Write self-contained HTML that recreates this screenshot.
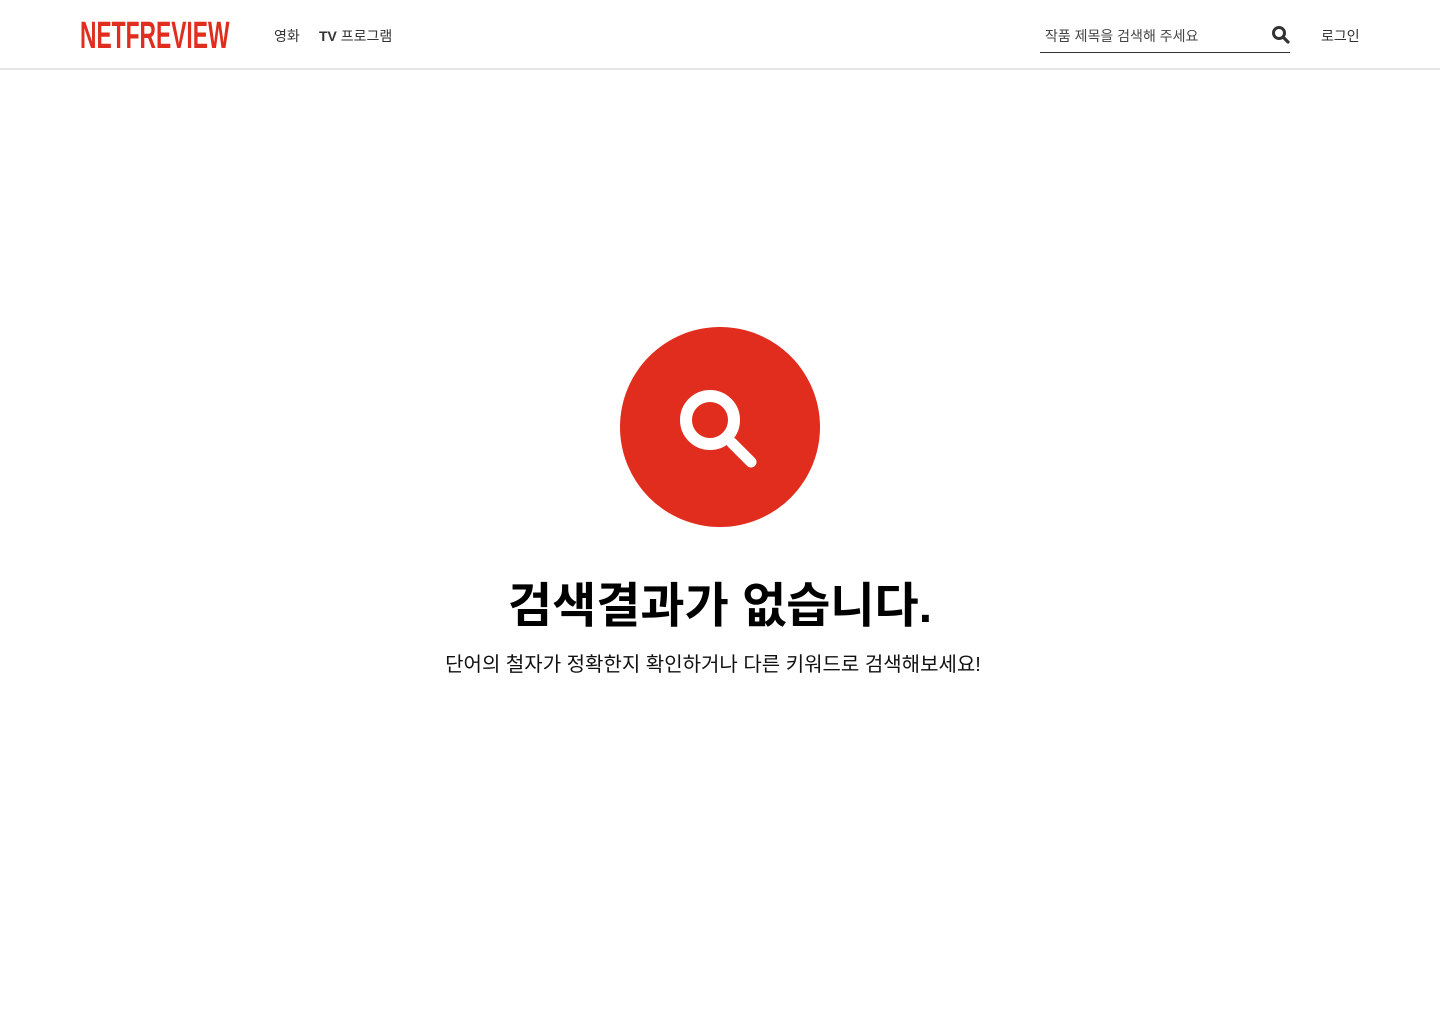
<!DOCTYPE html>
<html><head><meta charset="utf-8"><style>
*{margin:0;padding:0;box-sizing:border-box}
body{width:1440px;height:1024px;background:#fff;font-family:"Liberation Sans","Noto Sans CJK KR",sans-serif;color:#000;position:relative;overflow:hidden}
.hdr{position:absolute;left:0;top:0;width:1440px;height:70px;border-bottom:2px solid #e6e6e6}
.logo{position:absolute;left:80px;top:15px;font-size:38px;font-weight:bold;color:#e02d1d;transform:scaleX(0.6);transform-origin:left top;letter-spacing:0;line-height:42px}
.nav{position:absolute;top:27px;font-size:14px;color:#333;line-height:18px}
.search{position:absolute;left:1040px;top:20px;width:250px;height:33px;border-bottom:1.5px solid #333}
.search span{position:absolute;left:5px;top:6px;font-size:14px;color:#444}
h1{position:absolute;top:577px;width:1440px;text-align:center;font-size:48px;font-weight:bold;line-height:60px}
p{position:absolute;top:652px;left:-7px;width:1440px;text-align:center;font-size:20px;line-height:26px;color:#111}
</style></head><body>
<div class="hdr">
<div class="logo">NETFREVIEW</div>
<div class="nav" style="left:274px">영화</div>
<div class="nav" style="left:319px"><b>TV</b> 프로그램</div>
<div class="search"><span>작품 제목을 검색해 주세요</span></div>
<svg style="position:absolute;left:1271px;top:25px" width="20" height="20" viewBox="0 0 20 20"><circle cx="8" cy="8" r="5.5" fill="none" stroke="#333" stroke-width="3"/><line x1="12" y1="12" x2="17" y2="17" stroke="#333" stroke-width="3.2" stroke-linecap="round"/></svg>
<div class="nav" style="left:1321px">로그인</div>
</div>
<svg style="position:absolute;left:620px;top:327px" width="200" height="200" viewBox="0 0 200 200"><circle cx="100" cy="100" r="100" fill="#e02d1d"/><circle cx="90" cy="93" r="24" fill="none" stroke="#fff" stroke-width="12"/><line x1="112" y1="116" x2="131" y2="135" stroke="#fff" stroke-width="11" stroke-linecap="round"/></svg>
<h1>검색결과가 없습니다.</h1>
<p>단어의 철자가 정확한지 확인하거나 다른 키워드로 검색해보세요!</p>
</body></html>
